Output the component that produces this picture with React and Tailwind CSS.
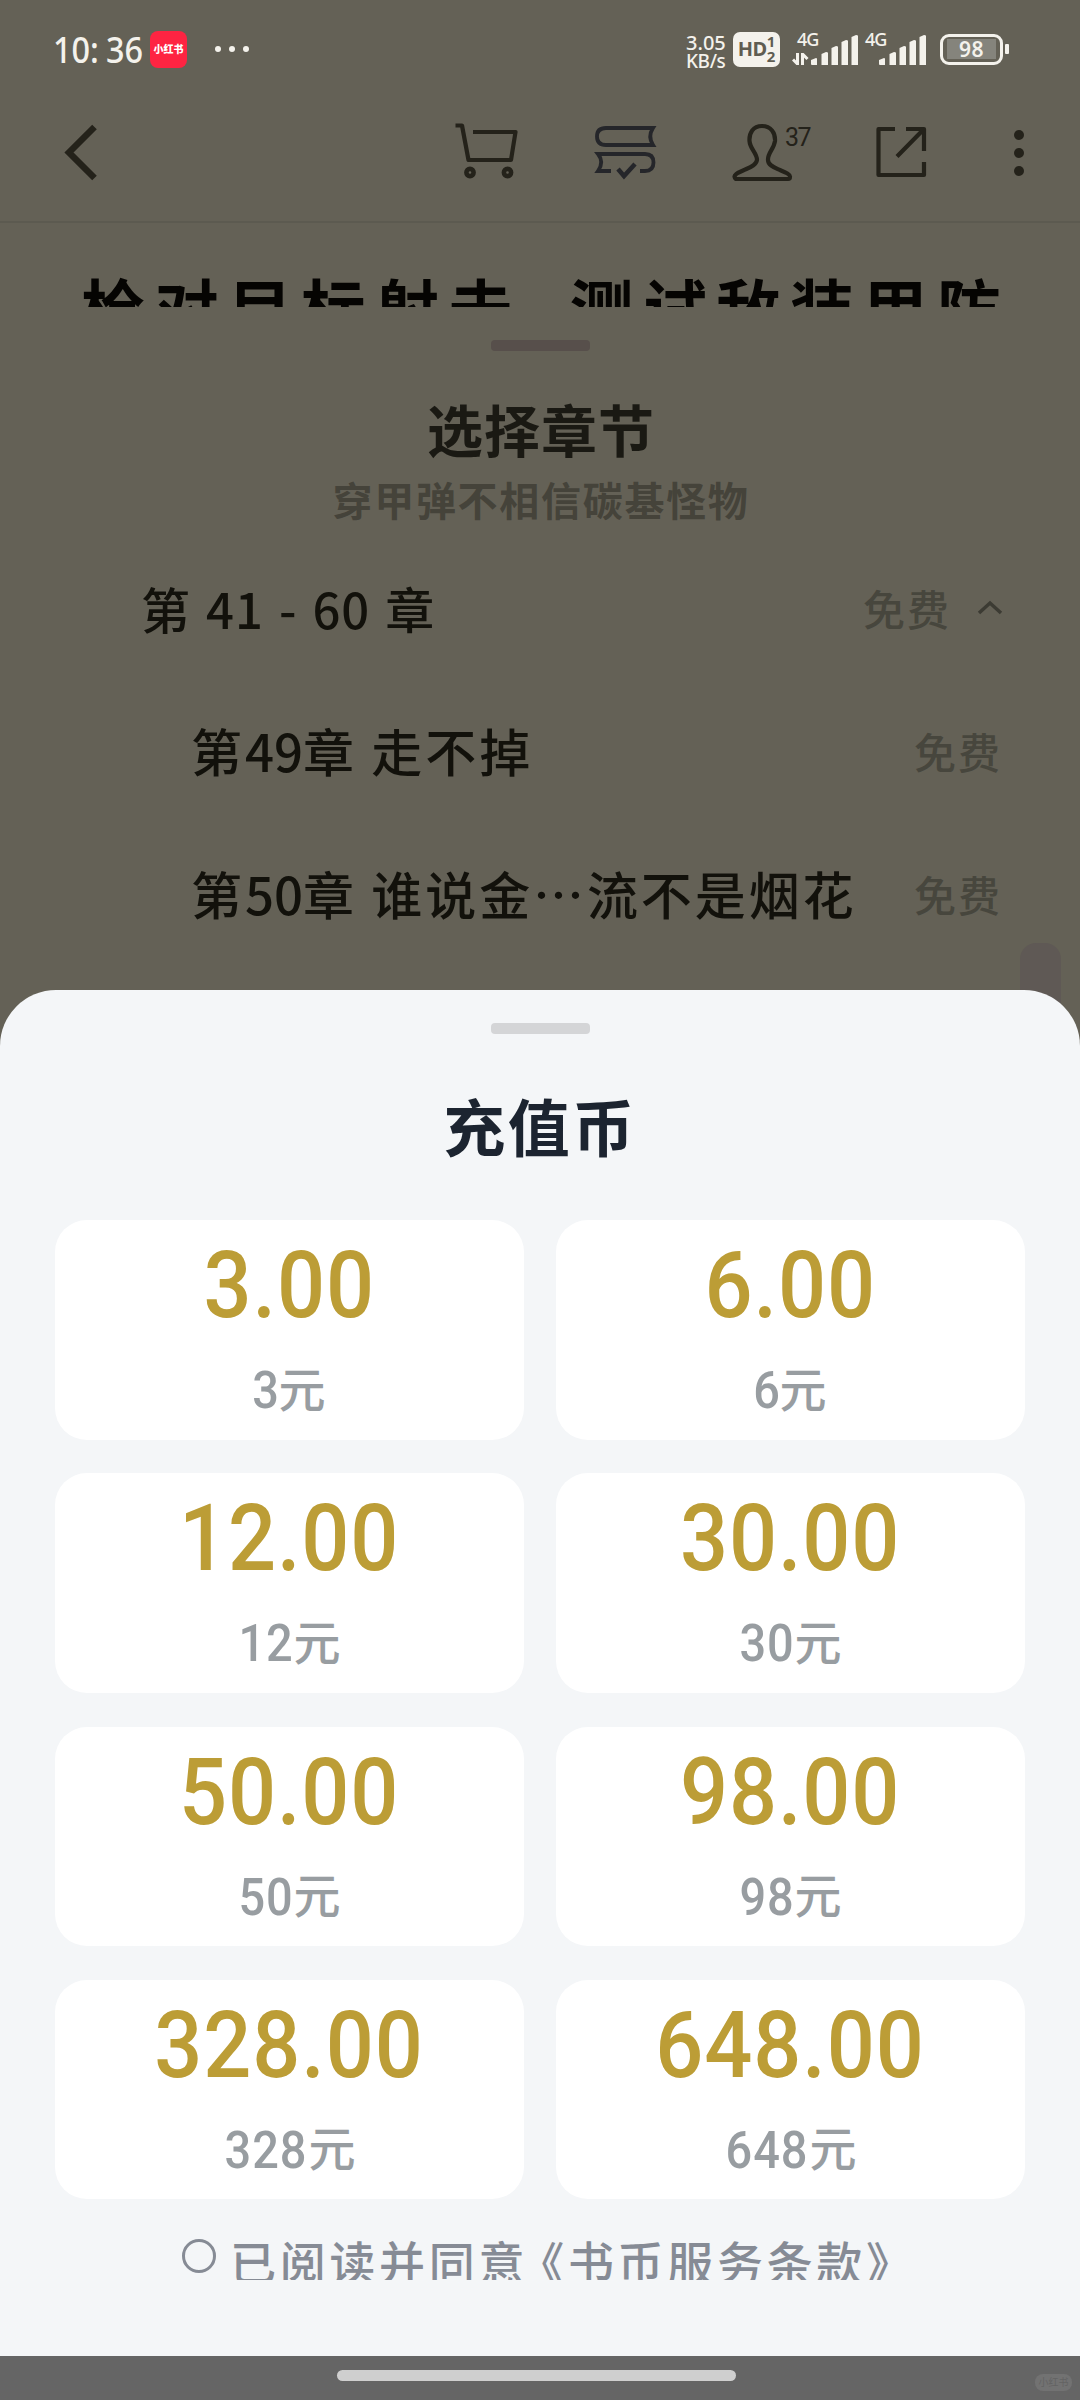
const amounts = [3, 6, 12, 30, 50, 98, 328, 648];

const chapters = [
  { id: 49, title: "走不掉" },
  { id: 50, title: "谁说金⋯流不是烟花" },
];

function SignalBars() {
  return (
    <svg className="h-8 w-12" viewBox="0 0 48 32" fill="currentColor">
      <path d="M1 26 L6 24 Q7 24 7 25 V31 H2 Q1 31 1 30Z" />
      <path d="M11.500 20 L16 18 Q18 18 18 19 V31 H11.500Z" />
      <path d="M21.500 14 L26 12 Q28 12 28 13 V31 H21.500Z" />
      <path d="M31.500 8 L36 6 Q38 6 38 7 V31 H31.500Z" />
      <path d="M41.500 3 L46 1 Q48 1 48 2 V31 H41.500Z" />
    </svg>
  );
}

function StatusBar() {
  return (
    <div className="flex h-[98px] items-center pl-[53px] pr-[71px] font-['Noto_Sans','Noto_Sans_CJK_SC',sans-serif] text-[#f4f2ec]">
      <div className="mt-[2px] w-[97px] origin-left scale-x-90 whitespace-nowrap text-[36px] leading-none font-medium">
        10<span className="mr-[8px]">:</span>36
      </div>
      <div className="flex h-[37px] w-[37px] items-center justify-center rounded-[8px] bg-[#fe2442]">
        <span className="whitespace-nowrap text-[10px] leading-none font-black text-white">小红书</span>
      </div>
      <div className="ml-[28px] flex gap-[8px]">
        <i className="h-[6px] w-[6px] rounded-full bg-current" />
        <i className="h-[6px] w-[6px] rounded-full bg-current" />
        <i className="h-[6px] w-[6px] rounded-full bg-current" />
      </div>

      <div className="ml-auto flex items-center">
        <div className="mt-[5px] mr-[7px] w-[40px] whitespace-nowrap text-[20px] leading-[19px] font-medium">
          <div>3.05</div>
          <div className="text-[19px] tracking-[-0.4px]">KB/s</div>
        </div>
        <div className="mr-[9px] flex h-[35px] w-[47px] items-center justify-center rounded-[7px] bg-[#f4f2ec] text-[#5f5d52]">
          <span className="text-[20px] leading-none font-bold tracking-[-0.5px]">HD</span>
          <span className="flex flex-col text-[15px] leading-[15px] font-bold">
            <span>1</span>
            <span>2</span>
          </span>
        </div>
        <div className="relative flex h-[34px] w-[69px] items-end justify-end">
          <span className="absolute -top-px left-[8px] text-[18px] leading-[16px] font-medium tracking-[-1px]">4G</span>
          <svg className="mb-px h-[12px] w-[18px]" viewBox="0 0 18 12" fill="none" stroke="currentColor" strokeWidth="3">
            <path d="M5.500 0V11L1 6.500M10.500 12V1L15.500 6" />
          </svg>
          <SignalBars />
        </div>
        <div className="relative flex h-[34px] w-[68px] items-end justify-end">
          <span className="absolute -top-px left-[7px] text-[18px] leading-[16px] font-medium tracking-[-1px]">4G</span>
          <SignalBars />
        </div>
        <div className="ml-[14px] flex h-[31px] w-[63px] items-center justify-center rounded-[9px] border-[3px] border-current">
          <div className="flex h-[20px] w-[49px] items-center justify-center bg-[#85847c] text-[21px] leading-none font-semibold tracking-[0.5px]">
            98
          </div>
        </div>
        <div className="ml-[2px] h-[10px] w-[4px] rounded-[1px] bg-current" />
      </div>
    </div>
  );
}

function NavBar() {
  return (
    <div className="flex h-[125px] items-start border-b-2 border-[#5c5a50] pt-[23px] text-[#24221a]">
      <svg className="ml-[60px] h-[64px] w-[44px]" viewBox="60 121 44 64" fill="none" stroke="currentColor" strokeWidth="6.500">
        <path d="M94.500 127 L69 152.500 L94.500 178" />
      </svg>
      <svg className="ml-[346px] h-[64px] w-[72px]" viewBox="450 121 72 64" fill="none" stroke="currentColor" strokeWidth="4.200" strokeLinejoin="round">
        <path d="M455.500 125.500H462L468.500 160H511L515.500 132H473" />
        <circle cx="470" cy="172.500" r="3.600" strokeWidth="4.600" />
        <circle cx="507.500" cy="172.500" r="3.600" strokeWidth="4.600" />
      </svg>
      <svg className="ml-[68px] h-[64px] w-[72px] text-[#25262a]" viewBox="590 121 72 64" fill="none" stroke="currentColor" strokeWidth="3.800">
        <path d="M653 128H606Q597 128 597 136.500T606 145H653Q647.500 136.500 653 128Z" />
        <path d="M611 171H598Q604.500 162 598 154H645Q653.500 154 653.500 162.500T645 171H640" />
        <path d="M618 169L624 176L635 164" strokeWidth="4.500" />
      </svg>
      <div className="relative ml-[66px]">
        <svg className="h-[64px] w-[72px]" viewBox="728 121 72 64" fill="none" stroke="currentColor" strokeWidth="4.200" strokeLinejoin="round">
          <path d="M762 126C753 126 749 133 749.500 141C750 149 757 153 757 160C756 166 748 168 743 170.500C737 173 734.500 174.500 734.500 176.500Q735 179 737 179H788Q790 179 790 176.500C790 174.500 787 173 781 170.500C776 168 768 166 768 160C767.500 153 774 149 775 141C775.500 133 771 126 762 126Z" />
        </svg>
        <span className="absolute top-[6px] left-[57px] font-['Roboto',sans-serif] text-[25px] leading-[22px] tracking-[-1.500px]">37</span>
      </div>
      <svg className="ml-[70px] h-[64px] w-[62px]" viewBox="870 121 62 64" fill="none" stroke="currentColor" strokeWidth="4.200" strokeLinejoin="round">
        <path d="M895 129H878.500V175H924V162M924 151V129H906M924 129L897 156.500" />
      </svg>
      <svg className="ml-[78px] h-[64px] w-[18px]" viewBox="1010 121 18 64" fill="currentColor">
        <circle cx="1019" cy="135" r="5" />
        <circle cx="1019" cy="153" r="5" />
        <circle cx="1019" cy="171" r="5" />
      </svg>
    </div>
  );
}

function ChapterSheet() {
  return (
    <div className="flex flex-col">
      <div className="mx-auto mt-[33px] h-[11px] w-[99px] rounded-[4px] bg-[#574f4b]" />
      <h2 className="mt-[38px] pl-[2px] text-center text-[56px] leading-[78px] font-bold tracking-[1px] text-[#1a1913]">选择章节</h2>
      <p className="mt-[7px] pl-[2px] text-center text-[40px] leading-[50px] font-bold tracking-[1.700px] text-[#45433a]">穿甲弹不相信碳基怪物</p>

      <div className="mt-[12px] flex h-[143px] items-center pr-[77px] pl-[141px] text-[#12110b]">
        <span className="text-[49px] leading-none font-medium tracking-[1px] [word-spacing:3px]">第 41 - 60 章</span>
        <span className="ml-auto text-[42px] leading-none font-medium tracking-[2px] text-[#47463d]">免费</span>
        <svg className="ml-[26px] h-[15px] w-[26px]" viewBox="0 0 26 15" fill="none" stroke="#3c3b33" strokeWidth="3.500">
          <path d="M2 13L13 3L24 13" />
        </svg>
      </div>
      {chapters.map((chapter) => (
        <div key={chapter.id} className="flex h-[143px] items-center pr-[78px] pl-[191px] text-[#12110b]">
          <span className="text-[51px] leading-none font-medium tracking-[2.900px]">
            第<span className="tracking-[0px]">{chapter.id}</span>章 {chapter.title}
          </span>
          <span className="ml-auto text-[42px] leading-none font-medium tracking-[2px] text-[#47463d]">免费</span>
        </div>
      ))}
    </div>
  );
}

function AmountCard({ amount }) {
  return (
    <button className="flex h-[219.500px] flex-col items-center rounded-[32px] bg-white">
      <span className="mt-[20px] block scale-x-91 font-['Roboto',sans-serif] text-[93px] leading-[92px] font-medium tracking-[1px] text-[#bc9d36]">
        {amount}.00
      </span>
      <span className="mt-[29px] flex items-center pr-[3px] text-[#989da1]">
        <span className="-mr-[2px] block scale-x-92 font-['Roboto',sans-serif] text-[51px] leading-[60px] font-medium tracking-[1px]">{amount}</span>
        <span className="-mt-[9px] text-[47px] leading-[60px] font-medium">元</span>
      </span>
    </button>
  );
}

function RechargeSheet() {
  return (
    <section className="absolute inset-x-0 top-[990px] flex h-[1366px] flex-col rounded-t-[56px] bg-[#f4f6f8] px-[55px]">
      <div className="mx-auto mt-[33px] h-[11px] w-[99px] rounded-[4px] bg-[#d4d5d7]" />
      <h1 className="mt-[48px] text-center text-[62px] leading-[86px] font-bold tracking-[2.500px] text-[#1c2430]">充值币</h1>
      <div className="mt-[52px] grid grid-cols-2 gap-x-[32px] gap-y-[33.800px]">
        {amounts.map((amount) => (
          <AmountCard key={amount} amount={amount} />
        ))}
      </div>
      {/* the line is cut off at its lower edge */}
      <label className="mt-[33px] flex h-[48px] items-start overflow-hidden pl-[127px] text-[#868b95]">
        <span className="mt-[7px] h-[34px] w-[34px] shrink-0 rounded-full border-[3px] border-current" />
        <span className="ml-[14px] text-[46px] leading-[57px] font-medium tracking-[3.700px] whitespace-nowrap">
          已阅读并同意<span className="-ml-[10px]">《</span>书币服务条款》
        </span>
      </label>
    </section>
  );
}

function App() {
  return (
    <main className="relative flex h-[2400px] w-[1080px] flex-col overflow-hidden bg-[#646156] font-['Noto_Sans_CJK_SC',sans-serif]">
      <StatusBar />
      <NavBar />
      <div className="h-[84px] overflow-hidden pt-[36px] pl-[81px] text-[64px] leading-[92px] font-bold tracking-[9.500px] whitespace-nowrap text-[#050402]">
        枪对目标射击<span className="-mr-[26px]">，</span>测试敌装甲防
      </div>
      <ChapterSheet />
      <div className="absolute top-[943px] right-[19px] h-[120px] w-[41px] rounded-t-[16px] bg-[#5f5955]" />
      <RechargeSheet />
      <footer className="mt-auto flex h-[44px] items-center justify-end bg-[#656565] pr-[8px]">
        <div className="mr-[299px] mb-[5px] h-[11px] w-[399px] rounded-full bg-[#cfcfcf]" />
        <div className="mt-[8px] flex h-[17px] w-[37px] items-center justify-center rounded-[8px] bg-[#727272] text-[10px] leading-none text-[#636363]">
          小红书
        </div>
      </footer>
    </main>
  );
}

export default App;
